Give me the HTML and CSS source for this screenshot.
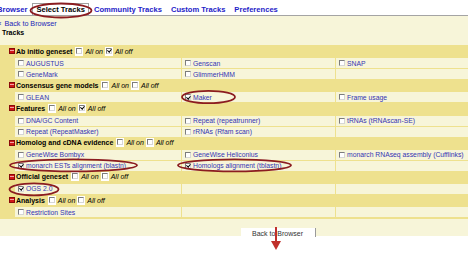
FILE: index.html
```html
<!DOCTYPE html>
<html>
<head>
<meta charset="utf-8">
<link rel="stylesheet" href="styles.css">
</head>
<body>
<div class="tabs">
  <a class="tab">Browser</a>
  <span class="tab sel">Select Tracks</span>
  <a class="tab">Community Tracks</a>
  <a class="tab">Custom Tracks</a>
  <a class="tab">Preferences</a>
</div>
<div class="page">
  <div class="back"><span class="lt">‹</span><a>Back to Browser</a></div>
  <div class="title">Tracks</div>
  <div class="tracks">
    <div class="sechead"><span class="tog"></span><b>Ab initio geneset</b><span class="hcb"><span class="cb"></span></span><i>All on</i><span class="hcb"><span class="cb on"></span></span><i>All off</i></div>
    <div class="rows">
      <div class="cell"><span class="cb"></span><a>AUGUSTUS</a></div>
      <div class="cell"><span class="cb"></span><a>Genscan</a></div>
      <div class="cell"><span class="cb"></span><a>SNAP</a></div>
      <div class="cell"><span class="cb"></span><a>GeneMark</a></div>
      <div class="cell"><span class="cb"></span><a>GlimmerHMM</a></div>
      <div class="cell"></div>
    </div>
    <div class="sechead"><span class="tog"></span><b>Consensus gene models</b><span class="hcb"><span class="cb"></span></span><i>All on</i><span class="hcb"><span class="cb"></span></span><i>All off</i></div>
    <div class="rows">
      <div class="cell"><span class="cb"></span><a>GLEAN</a></div>
      <div class="cell"><span class="cb on"></span><a>Maker</a></div>
      <div class="cell"><span class="cb"></span><a>Frame usage</a></div>
    </div>
    <div class="sechead"><span class="tog"></span><b>Features</b><span class="hcb"><span class="cb"></span></span><i>All on</i><span class="hcb"><span class="cb on"></span></span><i>All off</i></div>
    <div class="rows">
      <div class="cell"><span class="cb"></span><a>DNA/GC Content</a></div>
      <div class="cell"><span class="cb"></span><a>Repeat (repeatrunner)</a></div>
      <div class="cell"><span class="cb"></span><a>tRNAs (tRNAscan-SE)</a></div>
      <div class="cell"><span class="cb"></span><a>Repeat (RepeatMasker)</a></div>
      <div class="cell"><span class="cb"></span><a>rRNAs (Rfam scan)</a></div>
      <div class="cell"></div>
    </div>
    <div class="sechead"><span class="tog"></span><b>Homolog and cDNA evidence</b><span class="hcb"><span class="cb"></span></span><i>All on</i><span class="hcb"><span class="cb"></span></span><i>All off</i></div>
    <div class="rows">
      <div class="cell"><span class="cb"></span><a>GeneWise Bombyx</a></div>
      <div class="cell"><span class="cb"></span><a>GeneWise Heliconius</a></div>
      <div class="cell"><span class="cb"></span><a>monarch RNAseq assembly (Cufflinks)</a></div>
      <div class="cell"><span class="cb on"></span><a>monarch ESTs alignment (blastn)</a></div>
      <div class="cell"><span class="cb on"></span><a>Homologs alignment (tblastn)</a></div>
      <div class="cell"></div>
    </div>
    <div class="sechead"><span class="tog"></span><b>Official geneset</b><span class="hcb"><span class="cb"></span></span><i>All on</i><span class="hcb"><span class="cb"></span></span><i>All off</i></div>
    <div class="rows">
      <div class="cell"><span class="cb on"></span><a>OGS 2.0</a></div>
      <div class="cell"></div>
      <div class="cell"></div>
    </div>
    <div class="sechead"><span class="tog"></span><b>Analysis</b><span class="hcb"><span class="cb"></span></span><i>All on</i><span class="hcb"><span class="cb"></span></span><i>All off</i></div>
    <div class="rows last">
      <div class="cell"><span class="cb"></span><a>Restriction Sites</a></div>
      <div class="cell"></div>
      <div class="cell"></div>
    </div>
  </div>
  <div class="foot"><span class="btn">Back to Browser</span></div>
</div>
<svg class="marks" width="468" height="254" viewBox="0 0 468 254">
  <g fill="none" stroke="#8b1c20" stroke-width="1.8">
    <ellipse cx="61" cy="10.5" rx="30.5" ry="7"/>
    <ellipse cx="208.5" cy="97" rx="26.5" ry="6.2"/>
    <ellipse cx="73.5" cy="165.3" rx="63.5" ry="6"/>
    <ellipse cx="234.5" cy="165.3" rx="56.5" ry="6"/>
    <ellipse cx="34" cy="189.3" rx="24.5" ry="6"/>
  </g>
  <line x1="276" y1="227" x2="276" y2="243" stroke="#c0302b" stroke-width="2"/>
  <polygon points="271,241 281,241 276,250" fill="#c0302b"/>
</svg>
</body>
</html>
```
FILE: styles.css
```css
html, body {
  margin: 0;
  padding: 0;
  background: #ffffff;
  overflow: hidden;
  width: 468px;
  height: 254px;
  font-family: "Liberation Sans", Arial, sans-serif;
}

.tabs {
  display: flex;
  align-items: flex-end;
  height: 15px;
  border-bottom: 1px solid #a4a4a4;
  margin-left: -7.5px;
  background: #ffffff;
}

.tab {
  display: block;
  font-size: 7.6px;
  font-weight: bold;
  color: #1e22c8;
  line-height: 12px;
  height: 11px;
  padding: 0 3.5px;
  border: 1px solid transparent;
  border-bottom: none;
  white-space: nowrap;
}

.tab.sel {
  color: #000000;
  border-color: #a0a0a0;
  background: #ffffff;
}

.page {
  height: 220px;
  background: #f7f5d9;
  padding-top: 3px;
  box-sizing: border-box;
}

.back {
  font-size: 7.2px;
  line-height: 9px;
  color: #2226b8;
  white-space: nowrap;
}

.back .lt {
  margin-left: -1px;
  margin-right: 3px;
}

.title {
  font-size: 7px;
  font-weight: bold;
  line-height: 9px;
  padding-left: 2px;
  color: #000;
}

.tracks {
  margin-top: 8px;
  background: #eee18e;
  padding-bottom: 2px;
}

.sechead {
  height: 12.2px;
  display: flex;
  align-items: center;
  padding-left: 9px;
  font-size: 7px;
  color: #000;
  white-space: nowrap;
}

.sechead b {
  font-weight: bold;
}

.sechead i {
  font-style: italic;
  margin-left: 2px;
}

.tog {
  width: 6px;
  height: 6px;
  box-sizing: border-box;
  border: 1px solid #8a0a0a;
  background: linear-gradient(#d01818 0 1.5px, #f3a7a7 1.5px 2.5px, #d01818 2.5px);
  margin-right: 1px;
}

.hcb {
  width: 8px;
  height: 9px;
  background: #ffffff;
  margin-left: 3px;
  padding: 1px 0 0 1px;
  box-sizing: border-box;
}

.sechead i + .hcb {
  margin-left: 2px;
}

.cb {
  display: block;
  width: 6px;
  height: 6px;
  box-sizing: border-box;
  background: #ffffff;
  border: 1px solid;
  border-color: #7c7c7c #d6d6d6 #d6d6d6 #7c7c7c;
  flex: none;
}

.cb.on::after {
  content: "";
  display: block;
  width: 1.5px;
  height: 3px;
  margin: -0.5px 0 0 1.2px;
  border: solid #000;
  border-width: 0 1.3px 1.3px 0;
  transform: rotate(40deg);
}

.rows {
  display: grid;
  grid-template-columns: 166px 153px 1fr;
  grid-auto-rows: 10px;
  gap: 1px;
  padding: 1px 0 0 15px;
}

.cell {
  background: #f7f5d9;
  display: flex;
  align-items: center;
  padding-left: 3px;
  font-size: 6.8px;
  white-space: nowrap;
  overflow: hidden;
}

.cell .cb {
  margin-right: 2px;
}

.cell a {
  color: #3434b4;
}

.foot {
  padding: 9px 0 0 241px;
}

.btn {
  display: block;
  width: 75px;
  height: 9px;
  box-sizing: border-box;
  background: #ffffff;
  border-right: 1px solid #9a9a9a;
  padding-left: 11px;
  font-size: 7px;
  line-height: 11px;
  color: #333333;
  white-space: nowrap;
}

.marks {
  position: absolute;
  left: 0;
  top: 0;
}
```
